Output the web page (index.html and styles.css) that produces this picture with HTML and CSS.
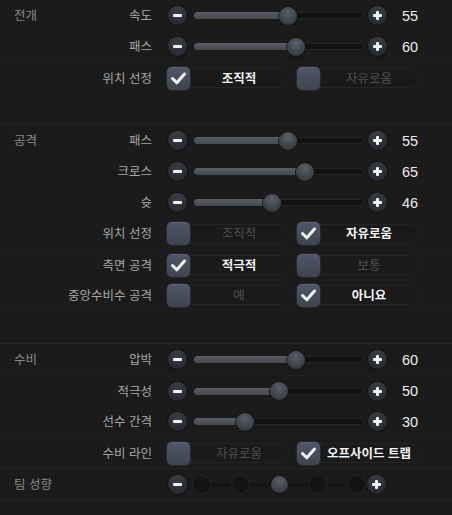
FILE: index.html
```html
<!DOCTYPE html>
<html lang="ko">
<head>
<meta charset="utf-8">
<link rel="stylesheet" href="styles.css">
</head>
<body>
<div class="panel">
  <section class="sec first">
    <div class="row">
      <div class="lab"><span class="sec-name">전개</span><span class="name">속도</span></div>
      <div class="slider"><span class="btn minus"></span><div class="track"><div class="fill" style="width:55%"></div><div class="thumb" style="left:55%"></div></div><span class="btn plus"></span><span class="val">55</span></div>
    </div>
    <div class="row">
      <div class="lab"><span class="sec-name"></span><span class="name">패스</span></div>
      <div class="slider"><span class="btn minus"></span><div class="track"><div class="fill" style="width:60%"></div><div class="thumb" style="left:60%"></div></div><span class="btn plus"></span><span class="val">60</span></div>
    </div>
    <div class="row sep">
      <div class="lab"><span class="sec-name"></span><span class="name">위치 선정</span></div>
      <div class="choice">
        <div class="opt on"><span class="box"><svg viewBox="0 0 23 23"><polyline points="5.5,11.5 9.8,15.8 17.5,7"/></svg></span><span class="pill">조직적</span></div>
        <div class="opt"><span class="box"></span><span class="pill">자유로움</span></div>
      </div>
    </div>
    <div class="spacer"></div>
  </section>

  <section class="sec second">
    <div class="row">
      <div class="lab"><span class="sec-name">공격</span><span class="name">패스</span></div>
      <div class="slider"><span class="btn minus"></span><div class="track"><div class="fill" style="width:55%"></div><div class="thumb" style="left:55%"></div></div><span class="btn plus"></span><span class="val">55</span></div>
    </div>
    <div class="row">
      <div class="lab"><span class="sec-name"></span><span class="name">크로스</span></div>
      <div class="slider"><span class="btn minus"></span><div class="track"><div class="fill" style="width:65%"></div><div class="thumb" style="left:65%"></div></div><span class="btn plus"></span><span class="val">65</span></div>
    </div>
    <div class="row">
      <div class="lab"><span class="sec-name"></span><span class="name">슛</span></div>
      <div class="slider"><span class="btn minus"></span><div class="track"><div class="fill" style="width:46%"></div><div class="thumb" style="left:46%"></div></div><span class="btn plus"></span><span class="val">46</span></div>
    </div>
    <div class="row">
      <div class="lab"><span class="sec-name"></span><span class="name">위치 선정</span></div>
      <div class="choice">
        <div class="opt"><span class="box"></span><span class="pill">조직적</span></div>
        <div class="opt on"><span class="box"><svg viewBox="0 0 23 23"><polyline points="5.5,11.5 9.8,15.8 17.5,7"/></svg></span><span class="pill">자유로움</span></div>
      </div>
    </div>
    <div class="row sep">
      <div class="lab"><span class="sec-name"></span><span class="name">측면 공격</span></div>
      <div class="choice">
        <div class="opt on"><span class="box"><svg viewBox="0 0 23 23"><polyline points="5.5,11.5 9.8,15.8 17.5,7"/></svg></span><span class="pill">적극적</span></div>
        <div class="opt"><span class="box"></span><span class="pill">보통</span></div>
      </div>
    </div>
    <div class="row sep-b">
      <div class="lab"><span class="sec-name"></span><span class="name">중앙수비수 공격</span></div>
      <div class="choice">
        <div class="opt"><span class="box"></span><span class="pill">예</span></div>
        <div class="opt on"><span class="box"><svg viewBox="0 0 23 23"><polyline points="5.5,11.5 9.8,15.8 17.5,7"/></svg></span><span class="pill">아니요</span></div>
      </div>
    </div>
    <div class="spacer"></div>
  </section>

  <section class="sec">
    <div class="row">
      <div class="lab"><span class="sec-name">수비</span><span class="name">압박</span></div>
      <div class="slider"><span class="btn minus"></span><div class="track"><div class="fill" style="width:60%"></div><div class="thumb" style="left:60%"></div></div><span class="btn plus"></span><span class="val">60</span></div>
    </div>
    <div class="row sep">
      <div class="lab"><span class="sec-name"></span><span class="name">적극성</span></div>
      <div class="slider"><span class="btn minus"></span><div class="track"><div class="fill" style="width:50%"></div><div class="thumb" style="left:50%"></div></div><span class="btn plus"></span><span class="val">50</span></div>
    </div>
    <div class="row">
      <div class="lab"><span class="sec-name"></span><span class="name">선수 간격</span></div>
      <div class="slider"><span class="btn minus"></span><div class="track"><div class="fill" style="width:30%"></div><div class="thumb" style="left:30%"></div></div><span class="btn plus"></span><span class="val">30</span></div>
    </div>
    <div class="row sep">
      <div class="lab"><span class="sec-name"></span><span class="name">수비 라인</span></div>
      <div class="choice">
        <div class="opt"><span class="box"></span><span class="pill">자유로움</span></div>
        <div class="opt on"><span class="box"><svg viewBox="0 0 23 23"><polyline points="5.5,11.5 9.8,15.8 17.5,7"/></svg></span><span class="pill">오프사이드 트랩</span></div>
      </div>
    </div>
  </section>

  <section class="sec last">
    <div class="row">
      <div class="lab"><span class="sec-name">팀 성향</span><span class="name"></span></div>
      <div class="slider"><span class="btn minus"></span>
        <div class="steps">
          <span class="dot"></span><span class="dot"></span><span class="dot cur"></span><span class="dot"></span><span class="dot"></span>
        </div>
        <span class="btn plus"></span></div>
    </div>
  </section>
</div>
</body>
</html>
```

FILE: styles.css
```css
* { box-sizing: border-box; }
html, body { margin: 0; padding: 0; }
body {
  width: 452px;
  height: 515px;
  background: #1b1b1b;
  font-family: "Noto Sans CJK KR", "Noto Sans", sans-serif;
  overflow: hidden;
}
.panel { width: 452px; }
.sec { border-top: 1px solid #252525; }
.sec.first { border-top: 0; }
.sec.second { padding-top: 1px; }
.sec.last { border-bottom: 1px solid #222222; }
.spacer { height: 30px; }
.sec.second .spacer { height: 32px; }

.row {
  height: 31px;
  display: grid;
  grid-template-columns: 152px 1fr;
  column-gap: 15px;
  align-items: center;
}
.row.sep { border-top: 1px solid #1f1f1f; }
.row.sep-b { border-bottom: 1px solid #1f1f1f; }

.lab {
  display: flex;
  justify-content: space-between;
  align-items: center;
  padding-left: 14px;
  font-size: 12.5px;
  line-height: 1;
}
.sec-name { color: #8a8a8a; }
.name { color: #a6a6a6; white-space: nowrap; }

.slider {
  display: flex;
  align-items: center;
  padding-left: 1px;
}
.btn {
  position: relative;
  width: 19px;
  height: 19px;
  border-radius: 50%;
  background: radial-gradient(circle at 50% 35%, #3a3f46 0%, #2a2e34 60%, #1f2227 100%);
  box-shadow: 0 0 0 1px #131313, inset 0 1px 0 rgba(255,255,255,0.08);
  flex: none;
}
.btn::before {
  content: "";
  position: absolute;
  left: 5px;
  top: 8px;
  width: 9px;
  height: 3px;
  border-radius: 1px;
  background: #f2f2f2;
}
.btn.plus::after {
  content: "";
  position: absolute;
  left: 8px;
  top: 5px;
  width: 3px;
  height: 9px;
  border-radius: 1px;
  background: #f2f2f2;
}
.track {
  position: relative;
  width: 170px;
  height: 7px;
  margin: 0 4px 0 7px;
  border-radius: 4px;
  background: #121212;
  box-shadow: inset 0 0 0 1px #232323;
}
.fill {
  position: absolute;
  left: 0;
  top: 0;
  height: 7px;
  border-radius: 4px;
  background: linear-gradient(#5a5e64, #45494e);
}
.thumb {
  position: absolute;
  top: 50%;
  width: 18px;
  height: 18px;
  border-radius: 50%;
  transform: translate(-50%, -50%);
  background: radial-gradient(circle at 50% 30%, #5a6068 0%, #40454c 55%, #2c3035 100%);
  box-shadow: 0 0 0 1px #151515;
}
.val {
  margin-left: 15px;
  font-family: "Liberation Sans", Arial, sans-serif;
  font-size: 14.5px;
  color: #ececec;
}

.steps {
  position: relative;
  display: flex;
  justify-content: space-between;
  align-items: center;
  width: 172px;
  margin: 0 2px 0 6px;
  background: linear-gradient(#151515, #151515) center / 100% 4px no-repeat;
}
.dot {
  width: 17px;
  height: 17px;
  border-radius: 50%;
  background: #141414;
  box-shadow: 0 0 0 1px #242424;
}
.dot.cur {
  background: radial-gradient(circle at 50% 30%, #5a6068 0%, #40454c 55%, #2c3035 100%);
  box-shadow: 0 0 0 1px #151515;
}

.choice {
  display: flex;
  gap: 8px;
}
.opt {
  display: flex;
  align-items: center;
  width: 122px;
}
.box {
  position: relative;
  z-index: 1;
  width: 23px;
  height: 23px;
  flex: none;
  border-radius: 5px;
  background: linear-gradient(#50556a, #40444f);
  box-shadow: 0 0 0 1px #26282e, inset 0 1px 0 rgba(255,255,255,0.08);
}
.box svg {
  display: block;
  width: 23px;
  height: 23px;
}
.box polyline {
  fill: none;
  stroke: #f2f2f2;
  stroke-width: 3;
  stroke-linecap: round;
  stroke-linejoin: round;
}
.pill {
  flex: 1;
  height: 20px;
  margin-left: -11px;
  padding-left: 10px;
  border-radius: 10px;
  border: 1px solid #242424;
  background: #1a1a1a;
  display: flex;
  align-items: center;
  justify-content: center;
  font-size: 12.5px;
  line-height: 1;
  color: #4e4e4e;
  white-space: nowrap;
}
.opt.on .pill {
  color: #f4f4f4;
  font-weight: bold;
}
```
